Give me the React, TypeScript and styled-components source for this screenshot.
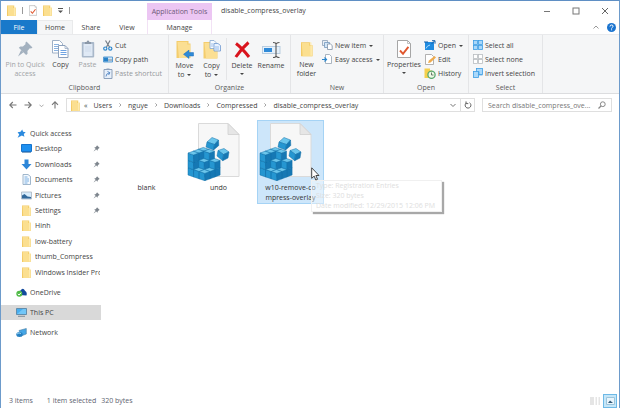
import React from "react";
import styled, { createGlobalStyle, css } from "styled-components";

const Global = createGlobalStyle`
  * { box-sizing: border-box; }
  body {
    margin: 0;
    background: #fff;
    color: #444;
    font: 7px/9px "Open Sans", "Noto Sans", sans-serif;
  }
  button, input { font: inherit; color: inherit; margin: 0; padding: 0; border: 0; background: none; }
  a { color: inherit; text-decoration: none; }
  ul { list-style: none; margin: 0; padding: 0; }
  svg { display: block; flex: none; }
`;

const Window = styled.div`
  display: flex;
  flex-direction: column;
  min-height: 100vh;
  border: 1px solid #6d9bcb;
  border-top-color: #5f8fc4;
  border-bottom: 0;
`;

/* Title bar and tabs */
const Header = styled.header`
  display: grid;
  grid-template-columns: 146px 65px 1fr auto;
  grid-template-rows: 19px 14px;
`;
const QuickTools = styled.div`
  display: flex;
  align-items: center;
  gap: 6px;
  padding-left: 6px;
`;
const Rule = styled.span`
  width: 1px;
  height: 7px;
  background: #999;
`;
const ToolButton = styled.button`
  display: flex;
  align-items: center;
  justify-content: center;
`;
const ContextTitle = styled.div`
  display: flex;
  align-items: center;
  justify-content: center;
  margin-top: 2px;
  background: #ecc6f3;
  color: #6e5a78;
  white-space: nowrap;
`;
const Title = styled.h1`
  margin: 0;
  padding: 5px 0 0 9px;
  font-size: 7px;
  line-height: 9px;
  font-weight: 400;
`;
const Controls = styled.div`
  display: flex;
  align-items: center;
  gap: 21px;
  padding-right: 10px;
`;
const Tabs = styled.nav`
  display: flex;
`;
const Tab = styled.button<{ $kind?: "file" | "active" | "context" }>`
  flex: 0 0 36px;
  line-height: 13px;
  ${(p) => p.$kind === "file" && css`background: #1979ca; color: #fff;`}
  ${(p) => p.$kind === "active" && css`background: #f5f6f7; border: 1px solid #e9eaeb; border-bottom: 0;`}
  ${(p) => p.$kind === "context" && css`border: solid #f2e2f5; border-width: 0 1px;`}
`;
const Help = styled.div`
  grid-column: 4;
  display: flex;
  align-items: center;
  justify-content: flex-end;
  gap: 8px;
  padding-right: 3px;
`;

/* Ribbon */
const RibbonBar = styled.div`
  display: flex;
  height: 60px;
  background: #f5f6f7;
  border-top: 1px solid #e9eaec;
  border-bottom: 1px solid #dcdddf;
`;
const GroupBox = styled.section<{ $width: number }>`
  flex: 0 0 ${(p) => p.$width}px;
  display: flex;
  flex-direction: column;
  border-right: 1px solid #e4e5e7;
  padding: 3px 2px 1px;
`;
const GroupBody = styled.div`
  flex: 1;
  display: flex;
`;
const GroupName = styled.h2`
  margin: 0;
  font-size: 7px;
  line-height: 9px;
  font-weight: 400;
  text-align: center;
  color: #5a5a5a;
`;
const LargeButton = styled.button<{ $width: number }>`
  flex: 0 0 ${(p) => p.$width}px;
  display: flex;
  flex-direction: column;
  align-items: center;
  gap: 2px;
  padding-top: 2px;
  white-space: pre;
  &:disabled { color: #a0a3a6; }
`;
const Stack = styled.div`
  display: flex;
  flex-direction: column;
  padding-left: 2px;
`;
const SmallButton = styled.button`
  display: flex;
  align-items: center;
  gap: 2px;
  height: 14px;
  white-space: nowrap;
  &:disabled { color: #96999c; }
`;
const Divider = styled.span`
  width: 1px;
  height: 42px;
  margin: 0 1px;
  background: #e4e5e7;
`;
const Arrow = styled.i`
  display: inline-block;
  border: 2px solid transparent;
  border-top-color: #444;
  border-bottom: 0;
  margin: 0 0 1px 3px;
`;
const ArrowBelow = styled(Arrow)`
  display: block;
  width: 4px;
  margin: 3px auto 0;
`;

/* Address row */
const AddressRow = styled.div`
  display: flex;
  align-items: center;
  gap: 7px;
  padding: 4px 7px 3px 8px;
`;
const History = styled.div`
  display: flex;
  align-items: center;
  gap: 7px;
`;
const AddressBox = styled.div`
  flex: 1;
  display: flex;
  align-items: center;
  height: 14px;
  border: 1px solid #dfdfdf;
  padding-left: 4px;
`;
const Crumbs = styled.nav`
  flex: 1;
  display: flex;
  align-items: center;
  gap: 6px;
  padding-left: 4px;
`;
const Refresh = styled.button`
  display: grid;
  place-items: center;
  width: 14px;
  height: 12px;
  margin-left: 4px;
  border-left: 1px solid #dfdfdf;
`;
const SearchBox = styled.label`
  flex: 0 0 130px;
  display: flex;
  align-items: center;
  height: 14px;
  border: 1px solid #dfdfdf;
  padding: 0 5px;
`;
const SearchInput = styled.input`
  flex: 1;
  min-width: 0;
  outline: 0;
  text-overflow: ellipsis;
  &::placeholder { color: #777; opacity: 1; }
`;

/* Body */
const Body = styled.div`
  flex: 1;
  display: flex;
`;
const Sidebar = styled.nav`
  flex: 0 0 100px;
  min-width: 0;
  overflow: hidden;
  padding-top: 11px;
`;
const Tree = styled.ul`
  display: grid;
  grid-template-columns: minmax(0, 1fr);
  grid-auto-rows: 1fr;
  height: 154px;
  margin-bottom: 5px;
`;
const Roots = styled.ul`
  display: grid;
  gap: 5px;
`;
const Place = styled.a<{ $nested?: boolean; $active?: boolean }>`
  display: flex;
  align-items: center;
  gap: 3px;
  height: 15px;
  padding: 0 1px 0 ${(p) => (p.$nested ? 20 : 15)}px;
  background: ${(p) => (p.$active ? "#d9d9d9" : "transparent")};
`;
const PlaceIcon = styled.span`
  display: grid;
  place-items: center;
  flex: 0 0 11px;
`;
const PlaceName = styled.span`
  flex: 1;
  overflow: hidden;
  white-space: nowrap;
`;
const Files = styled.main`
  flex: 1;
  display: flex;
  align-items: flex-start;
  gap: 5px;
  padding: 5px 12px;
`;
const FileSlot = styled.div`
  position: relative;
  flex: 0 0 67px;
`;
const FileButton = styled.button<{ $selected?: boolean }>`
  display: flex;
  flex-direction: column;
  align-items: center;
  gap: 2px;
  width: 100%;
  min-height: 83px;
  border: 1px solid ${(p) => (p.$selected ? "#a5d3f5" : "transparent")};
  background: ${(p) => (p.$selected ? "#cde6fa" : "transparent")};
  line-height: 10px;
  color: #333;
  white-space: pre;
  padding-top: 1px;
`;
const Thumb = styled.span`
  display: block;
  width: 63px;
  height: 59px;
`;
const Tooltip = styled.div`
  position: absolute;
  left: 54px;
  top: 60px;
  width: 131px;
  padding: 0 4px;
  border: 1px solid #f0f0f0;
  background: rgba(255, 255, 255, 0.4);
  box-shadow: 2px 2px 1px #a8a8a8;
  color: #dedede;
  line-height: 10px;
  white-space: nowrap;
`;
const Pointer = styled.span`
  position: absolute;
  left: 54px;
  top: 47px;
`;
const Status = styled.footer`
  display: flex;
  align-items: center;
  height: 15px;
  padding: 0 2px 0 8px;
  color: #5d6470;
`;
const StatusText = styled.span<{ $gap: number }>`
  margin-right: ${(p) => p.$gap}px;
`;
const ViewButtons = styled.div`
  display: flex;
  align-items: center;
  gap: 2px;
  margin-left: auto;
`;
const ViewButton = styled.button<{ $on?: boolean }>`
  display: grid;
  place-items: center;
  width: ${(p) => (p.$on ? 14 : 12)}px;
  height: 14px;
  border: ${(p) => (p.$on ? "1px solid #6db9e6" : "0")};
  background: ${(p) => (p.$on ? "#c5e6f8" : "none")};
`;

/* Icons */
const Folder = ({ w = 9, h = 11 }: { w?: number; h?: number }) => (
  <svg width={w} height={h} viewBox="0 0 9 11">
    <path d="M0 .5h7v2h1.600V11H0z" fill="#f3ca66" />
    <path d="M.6 1h5.600v2H8.600v8H1.200z" fill="#fbdf90" />
    <path d="M6.600.8h1v9.600" fill="none" stroke="#fff0bf" strokeWidth=".7" />
  </svg>
);
const CheckPage = ({ w, h }: { w: number; h: number }) => (
  <svg width={w} height={h} viewBox="0 0 14 18">
    <path d="M.5.5h10l3 3v14H.5z" fill="#fff" stroke="#a6a6a6" />
    <path d="M10.500 .5v3h3" fill="none" stroke="#a6a6a6" strokeWidth=".7" />
    <path d="M3 10.500l3 3.300 5.400-7" fill="none" stroke="#e0572e" strokeWidth="1.900" />
  </svg>
);
const PinLarge = () => (
  <svg width="16" height="18" viewBox="0 0 16 18">
    <g fill="#a3b1bf">
      <path d="M9.500 1.500l6 6-1.500 1-1.200-.3-2.400 2.900.2 2.600-1.500 1.300L1.800 7.800l1.500-1.300 2.600.1 2.800-2.500-.5-1.200z" />
      <path d="M4.200 10l2.300 2.300L1 16.500z" />
    </g>
  </svg>
);
const CopyPages = () => (
  <svg width="17" height="18" viewBox="0 0 17 18">
    <path d="M.5.5h7l3 3v9.500H.5z" fill="#fff" stroke="#9fb0c6" />
    <path d="M2 4.500h5M2 6.500h5M2 8.500h4M2 10.500h4" stroke="#8bb2e0" />
    <path d="M6.500 5.500h6.500l3 3v9H6.500z" fill="#fff" stroke="#8da1bc" />
    <path d="M13 5.500v3h3" fill="none" stroke="#8da1bc" strokeWidth=".7" />
    <path d="M8.500 10.500h6M8.500 12.500h6M8.500 14.500h6" stroke="#6fa3e2" />
  </svg>
);
const Clipboard = () => (
  <svg width="14" height="18" viewBox="0 0 14 18">
    <rect x=".8" y="2" width="12.400" height="15.400" rx=".8" fill="#a9b8ca" />
    <path d="M2.500 4h9v12h-9z" fill="#dfe9f5" />
    <path d="M4 4V2h1.500Q7-.8 8.500 2H10v2z" fill="#8b98a8" />
    <path d="M4 7h6M4 9h6M4 11h6" stroke="#c8d7e8" strokeWidth=".7" />
  </svg>
);
const FolderArrow = () => (
  <svg width="18" height="19" viewBox="0 0 18 19">
    <path d="M.5 1h12v2.500h2V18H.5z" fill="#f4cd6d" />
    <path d="M1.500 2h9.800v2.500h2.700V18h-11z" fill="#fbdf93" />
    <path d="M17.500 12.600v3.400h-4.500v2.500L7.500 14.300l5.500-4.200v2.500z" fill="#2f8ad8" stroke="#1f6db9" strokeWidth=".5" />
  </svg>
);
const FolderPages = () => (
  <svg width="18" height="19" viewBox="0 0 18 19">
    <path d="M.5 2h12v2.500h2V18.500H.5z" fill="#f4cd6d" />
    <path d="M1.500 3h9.800v3h2.700V18.500h-11z" fill="#fbdf93" />
    <path d="M7 .5h4l2 2v6H7z" fill="#f7fbff" stroke="#84a6d0" strokeWidth=".8" />
    <path d="M11 3.500h4l2.500 2v5.500H11z" fill="#eaf3ff" stroke="#6e98cf" strokeWidth=".8" />
    <path d="M8 4h2.500M8 6h2.500M12 7h4M12 9h4" stroke="#75a6e2" strokeWidth=".7" />
  </svg>
);
const Cross = () => (
  <svg width="17" height="19" viewBox="0 0 17 19">
    <path d="M2 3.500Q8 8 15 17M14.500 2.500Q8 8 1.800 17" fill="none" stroke="#d9141d" strokeWidth="3" />
  </svg>
);
const RenameIcon = () => (
  <svg width="19" height="19" viewBox="0 0 19 19">
    <rect x=".5" y="6.500" width="17.500" height="7" fill="#e6f1fb" stroke="#b9cde0" />
    <path d="M2 8h8v4H2z" fill="#2f8ad8" />
    <path d="M11 2.500q3 0 3 1.500v12q0 1.500-3 1.500M17.500 2.500q-3 0-3 1.500M17.500 17.500q-3 0-3-1.500" fill="none" stroke="#555" strokeWidth="1.100" />
  </svg>
);
const Scissors = () => (
  <svg width="10" height="11" viewBox="0 0 10 11">
    <path d="M2.500.5L6.500 7M7 .5L3.500 7" stroke="#777f88" strokeWidth="1.200" />
    <circle cx="2.300" cy="8.600" r="1.600" fill="none" stroke="#2c86cc" strokeWidth="1.200" />
    <circle cx="7.300" cy="8.600" r="1.600" fill="none" stroke="#2c86cc" strokeWidth="1.200" />
  </svg>
);
const PathIcon = () => (
  <svg width="10" height="7" viewBox="0 0 10 7">
    <path d="M.5 1h9v5h-9z" fill="#cfe5f7" stroke="#5b9dd3" />
    <path d="M1 1.500h4v4H1z" fill="#2882c8" />
    <path d="M5.500 4h1M7.500 4h1" stroke="#333" />
  </svg>
);
const ShortcutIcon = () => (
  <svg width="10" height="11" viewBox="0 0 10 11">
    <path d="M1 1.500h8v9H1z" fill="#e6effa" stroke="#8da1bb" />
    <path d="M3.500.5h3v1.500h-3z" fill="#8da1bb" />
    <path d="M3 8.500q0-3 3-3.500M4.500 3.500L7 4.800 5.500 7" fill="none" stroke="#5f8fc8" />
  </svg>
);
const NewItemIcon = () => (
  <svg width="11" height="10" viewBox="0 0 11 10">
    <path d="M.5.5h5v5h-5z" fill="#e8eef5" stroke="#8ba0b8" strokeWidth=".8" />
    <path d="M2.500 2.500h5v5h-5z" fill="#d3e6f7" stroke="#7497bd" strokeWidth=".8" />
    <path d="M5.500 4h3l1.700 1.500v4H5.500z" fill="#fff" stroke="#7f91a6" strokeWidth=".8" />
  </svg>
);
const EasyIcon = () => (
  <svg width="11" height="10" viewBox="0 0 11 10">
    <path d="M3.500.5h4l2 2v7h-6z" fill="#fff" stroke="#97a4b3" strokeWidth=".8" />
    <path d="M0 5.500h4M2.500 3.500l2 2-2 2" fill="none" stroke="#2c86cc" strokeWidth="1.200" />
  </svg>
);
const OpenIcon = () => (
  <svg width="12" height="11" viewBox="0 0 12 11">
    <path d="M1 2h9v8H1z" fill="#1f8be0" />
    <path d="M0 2h4M7.500 4l3-3M8 .7h3v3" stroke="#155fa8" fill="none" />
    <path d="M2 8.500q1-3 4-3.500" stroke="#a9dcff" fill="none" />
  </svg>
);
const EditIcon = () => (
  <svg width="12" height="11" viewBox="0 0 12 11">
    <path d="M1.500.5h6l2 2v8h-8z" fill="#fff" stroke="#a0a0a0" strokeWidth=".8" />
    <path d="M4 9l1-2.500L10.500 2 12 3.500 6.500 8.500z" fill="#efab4d" />
  </svg>
);
const HistoryIcon = () => (
  <svg width="12" height="11" viewBox="0 0 12 11">
    <path d="M.5.5H6v2h2V10H.5z" fill="#f5d04d" />
    <circle cx="7.500" cy="6.800" r="3.600" fill="#eefae7" stroke="#5aa870" strokeWidth="1.300" />
    <path d="M7.500 4.500V7h2" stroke="#4b5d52" strokeWidth=".8" fill="none" />
  </svg>
);
const SelectIcon = ({ kind }: { kind: "all" | "none" | "invert" }) => {
  const on = { fill: "#a9d8fa", stroke: "#3d9de4" };
  const off = { fill: "#fff", stroke: "#b9bcc0" };
  if (kind === "invert")
    return (
      <svg width="10" height="10" viewBox="0 0 10 10">
        <rect x="3.500" y=".5" width="6" height="6" {...on} strokeWidth=".8" />
        <rect x=".5" y="3.500" width="5" height="6" {...on} strokeWidth=".8" />
        <path d="M6 3.500v3.500h3.500" stroke="#3d9de4" fill="none" strokeWidth=".7" />
      </svg>
    );
  const style = kind === "all" ? on : off;
  return (
    <svg width="10" height="10" viewBox="0 0 10 10">
      {[0, 5].map((x) =>
        [0, 5].map((y) => (
          <rect key={`${x}${y}`} x={x + 0.5} y={y + 0.5} width="4" height="4" {...style} strokeWidth=".8" />
        )),
      )}
    </svg>
  );
};
const NavArrow = ({ dir }: { dir: "left" | "right" | "up" }) => {
  const d = {
    left: "M7.500 4H1M3.800 1L.8 4l3 3",
    right: "M.5 4H7M4.200 1l3 3-3 3",
    up: "M4 7.500V1M1 3.800l3-3 3 3",
  }[dir];
  return (
    <svg width="8" height="8" viewBox="0 0 8 8">
      <path d={d} fill="none" stroke="#777" strokeWidth="1.100" />
    </svg>
  );
};
const Chevron = ({ dir = "down", size = 6, color = "#777" }: { dir?: "down" | "up" | "right"; size?: number; color?: string }) => (
  <svg width={size} height={size} viewBox="0 0 6 6">
    <path
      d={dir === "down" ? "M.5 2L3 4.500 5.500 2" : dir === "up" ? "M.5 4.500L3 2l2.500 2.500" : "M2 .5L4.500 3 2 5.500"}
      fill="none"
      stroke={color}
    />
  </svg>
);
const SmallPin = () => (
  <svg width="7" height="7" viewBox="0 0 7 7">
    <path d="M4 .3L6.700 3l-.8.3-1.200 1.200-.2 1.300L1.200 2.500l1.300-.2L3.700 1zM2.300 4L.5 6.500 3 4.700z" fill="#7d858d" />
  </svg>
);
const StarPin = () => (
  <svg width="9" height="9" viewBox="0 0 9 9">
    <path d="M5.200.5l.9 2.300 2.600.4L6.800 5l.6 2.800-2.500-1.200L.6 8.700l1.600-3.200L.6 3.200l2.900-.5z" fill="#2b8ade" />
  </svg>
);
const Desktop = () => (
  <svg width="11" height="9" viewBox="0 0 11 9">
    <path d="M.5.500h10v7H.5z" fill="#1e90f0" stroke="#1674cd" />
    <path d="M1 8.300h9" stroke="#3a6ea5" strokeWidth=".8" />
  </svg>
);
const Download = () => (
  <svg width="11" height="11" viewBox="0 0 11 11">
    <path d="M3.500.5h4V5H10.500L5.500 10.500.5 5h3z" fill="#2d86d8" />
  </svg>
);
const DocumentIcon = () => (
  <svg width="11" height="11" viewBox="0 0 11 11">
    <path d="M2 .5h5l2.500 2v8H2z" fill="#f4f9fe" stroke="#89a4bf" strokeWidth=".8" />
    <path d="M3.500 3h3M3.500 5h4.500M3.500 7h4.500M3.500 9h3" stroke="#5e9edc" strokeWidth=".8" />
  </svg>
);
const Picture = () => (
  <svg width="11" height="9" viewBox="0 0 11 9">
    <path d="M.5 1h10v7H.5z" fill="#d8ecfb" stroke="#a8b4c0" strokeWidth=".8" />
    <path d="M1 7.500V4.500l2.500-1.500 3 2.500 3.500.5v1.500z" fill="#32699b" />
  </svg>
);
const OneDrive = () => (
  <svg width="11" height="9" viewBox="0 0 11 9">
    <path d="M3 7Q1.500 3 4.500 2.500 7-1 9 2.800 11.500 4 10.500 7.500z" fill="#12499d" />
    <circle cx="3.300" cy="5.800" r="3" fill="#4fba46" />
    <path d="M1.800 5.800l1.200 1.300 2-2.400" fill="none" stroke="#fff" />
  </svg>
);
const Computer = () => (
  <svg width="11" height="9" viewBox="0 0 11 9">
    <path d="M.5.5h10v6H.5z" fill="#47aef0" stroke="#54809f" strokeWidth=".8" />
    <path d="M1 6L7 1h3v5z" fill="#71c6f8" />
    <path d="M2 8.300h7" stroke="#7d8c98" />
  </svg>
);
const NetworkIcon = () => (
  <svg width="11" height="10" viewBox="0 0 11 10">
    <path d="M3 2.500l7.300-2v5.500L5 8z" fill="#45a6e6" stroke="#4c7d9f" strokeWidth=".6" />
    <ellipse cx="3.500" cy="6.500" rx="3.200" ry="2.500" fill="#2680c2" />
    <path d="M1 6q2-2 4-.5" stroke="#9ad5f7" fill="none" />
  </svg>
);

/* Stacked cubes: number of cubes on each cell of a 3x3 base */
const heights = [
  [3, 3, 3],
  [1, 2, 3],
  [1, 1, 2],
];
const pt = (i: number, j: number, k: number) => `${1 + 5.6 * i + 5.1 * j},${53 + 1.9 * i - 1.9 * j - 7.3 * k}`;
const RegistryFile = () => {
  const cubes: React.ReactNode[] = [];
  for (let i = 0; i < 3; i++)
    for (let j = 2; j >= 0; j--)
      for (let k = 0; k < heights[i][j]; k++)
        cubes.push(
          <g key={`${i}${j}${k}`}>
            <polygon fill="#2596d1" points={[pt(i, j, k), pt(i + 1, j, k), pt(i + 1, j, k + 1), pt(i, j, k + 1)].join(" ")} />
            <polygon fill="#1678b4" points={[pt(i + 1, j, k), pt(i + 1, j + 1, k), pt(i + 1, j + 1, k + 1), pt(i + 1, j, k + 1)].join(" ")} />
            <polygon fill="#6cc6ec" points={[pt(i, j, k + 1), pt(i + 1, j, k + 1), pt(i + 1, j + 1, k + 1), pt(i, j + 1, k + 1)].join(" ")} />
          </g>,
        );
  return (
    <svg width="54" height="59" viewBox="0 0 54 59">
      <path d="M11.500 1.500H41l11 11V54.500H11.500z" fill="#f7f7f7" stroke="#dadada" />
      <path d="M41 1.500v11h11z" fill="#e6e6e6" stroke="#cfcfcf" strokeWidth=".8" />
      <g stroke="#1270a8" strokeWidth=".5" strokeLinejoin="round">
        {cubes}
        <path d="M20 20l5-4.500 6.500 2.500-4 4.500z" fill="#6cc6ec" />
        <path d="M20 20l7.500 2.500-1 5.500L19 25z" fill="#2596d1" />
        <path d="M27.500 22.500l4-4.500.3 5.500-5.300 4.500z" fill="#1678b4" />
        <path d="M31 28.500l6-2 5 3.500-5.500 2.500z" fill="#6cc6ec" />
        <path d="M31 28.500l5.500 4-.8 6.200L30 34z" fill="#2596d1" />
        <path d="M36.500 32.500l5.500-2.500-1 6-5.300 2.700z" fill="#1678b4" />
      </g>
    </svg>
  );
};

const Group = ({ name, width, children }: { name: string; width: number; children: React.ReactNode }) => (
  <GroupBox $width={width} aria-label={name}>
    <GroupBody>{children}</GroupBody>
    <GroupName>{name}</GroupName>
  </GroupBox>
);

const quick = [
  { name: "Desktop", icon: <Desktop />, pinned: true },
  { name: "Downloads", icon: <Download />, pinned: true },
  { name: "Documents", icon: <DocumentIcon />, pinned: true },
  { name: "Pictures", icon: <Picture />, pinned: true },
  { name: "Settings", icon: <Folder />, pinned: true },
  { name: "Hinh", icon: <Folder /> },
  { name: "low-battery", icon: <Folder /> },
  { name: "thumb_Compress", icon: <Folder /> },
  { name: "Windows Insider Pro", icon: <Folder /> },
];
const roots = [
  { name: "OneDrive", icon: <OneDrive /> },
  { name: "This PC", icon: <Computer />, active: true },
  { name: "Network", icon: <NetworkIcon /> },
];
const path = ["Users", "nguye", "Downloads", "Compressed", "disable_compress_overlay"];

export default function App() {
  return (
    <>
      <Global />
      <Window>
        <Header>
          <QuickTools>
            <Folder />
            <Rule />
            <ToolButton aria-label="Properties"><CheckPage w={8} h={11} /></ToolButton>
            <ToolButton aria-label="New folder"><Folder /></ToolButton>
            <ToolButton aria-label="Customize toolbar">
              <svg width="5" height="6" viewBox="0 0 5 6">
                <path d="M0 .5h5" stroke="#555" />
                <path d="M0 2.500h5L2.500 5z" fill="#555" />
              </svg>
            </ToolButton>
            <Rule />
          </QuickTools>
          <ContextTitle>Application Tools</ContextTitle>
          <Title>disable_compress_overlay</Title>
          <Controls>
            <ToolButton aria-label="Minimize">
              <svg width="8" height="8" viewBox="0 0 8 8"><path d="M1 4.500h6" stroke="#777" /></svg>
            </ToolButton>
            <ToolButton aria-label="Maximize">
              <svg width="8" height="8" viewBox="0 0 8 8"><rect x="1" y="1" width="6" height="6" fill="none" stroke="#777" /></svg>
            </ToolButton>
            <ToolButton aria-label="Close">
              <svg width="8" height="8" viewBox="0 0 8 8"><path d="M1 1l6 6M7 1L1 7" stroke="#666" /></svg>
            </ToolButton>
          </Controls>
          <Tabs>
            <Tab $kind="file">File</Tab>
            <Tab $kind="active">Home</Tab>
            <Tab>Share</Tab>
            <Tab>View</Tab>
          </Tabs>
          <Tab $kind="context">Manage</Tab>
          <Help>
            <ToolButton aria-label="Collapse ribbon"><Chevron dir="up" color="#999" /></ToolButton>
            <ToolButton aria-label="Help">
              <svg width="9" height="9" viewBox="0 0 9 9">
                <circle cx="4.500" cy="4.500" r="4.500" fill="#1b74cf" />
                <path d="M3 3.500q0-1.500 1.600-1.500T6 3.400Q6 4.200 4.600 5v.5M4.600 6.300v1" fill="none" stroke="#fff" />
              </svg>
            </ToolButton>
          </Help>
        </Header>

        <RibbonBar>
          <Group name="Clipboard" width={168}>
            <LargeButton $width={44} disabled><PinLarge />{"Pin to Quick\naccess"}</LargeButton>
            <LargeButton $width={27}><CopyPages />Copy</LargeButton>
            <LargeButton $width={27} disabled><Clipboard />Paste</LargeButton>
            <Stack>
              <SmallButton><Scissors />Cut</SmallButton>
              <SmallButton><PathIcon />Copy path</SmallButton>
              <SmallButton disabled><ShortcutIcon />Paste shortcut</SmallButton>
            </Stack>
          </Group>
          <Group name="Organize" width={122}>
            <LargeButton $width={27}><FolderArrow /><span>{"Move\nto"}<Arrow /></span></LargeButton>
            <LargeButton $width={27}><FolderPages /><span>{"Copy\nto"}<Arrow /></span></LargeButton>
            <Divider />
            <LargeButton $width={28}><Cross /><span>Delete<ArrowBelow /></span></LargeButton>
            <LargeButton $width={30}><RenameIcon />Rename</LargeButton>
          </Group>
          <Group name="New" width={93}>
            <LargeButton $width={27}><Folder w={12} h={18} />{"New\nfolder"}</LargeButton>
            <Stack>
              <SmallButton><NewItemIcon /><span>New item<Arrow /></span></SmallButton>
              <SmallButton><EasyIcon /><span>Easy access<Arrow /></span></SmallButton>
            </Stack>
          </Group>
          <Group name="Open" width={85}>
            <LargeButton $width={36}><CheckPage w={14} h={18} /><span>Properties<ArrowBelow /></span></LargeButton>
            <Stack>
              <SmallButton><OpenIcon /><span>Open<Arrow /></span></SmallButton>
              <SmallButton><EditIcon />Edit</SmallButton>
              <SmallButton><HistoryIcon />History</SmallButton>
            </Stack>
          </Group>
          <Group name="Select" width={74}>
            <Stack>
              <SmallButton><SelectIcon kind="all" />Select all</SmallButton>
              <SmallButton><SelectIcon kind="none" />Select none</SmallButton>
              <SmallButton><SelectIcon kind="invert" />Invert selection</SmallButton>
            </Stack>
          </Group>
        </RibbonBar>

        <AddressRow>
          <History>
            <ToolButton aria-label="Back"><NavArrow dir="left" /></ToolButton>
            <ToolButton aria-label="Forward"><NavArrow dir="right" /></ToolButton>
            <ToolButton aria-label="Recent"><Chevron size={5} color="#999" /></ToolButton>
            <ToolButton aria-label="Up"><NavArrow dir="up" /></ToolButton>
          </History>
          <AddressBox>
            <Folder />
            <Crumbs aria-label="Path">
              <span>«</span>
              {path.map((p, i) => (
                <React.Fragment key={p}>
                  {i > 0 && <Chevron dir="right" size={4} />}
                  <a href="#">{p}</a>
                </React.Fragment>
              ))}
            </Crumbs>
            <ToolButton aria-label="Previous locations"><Chevron /></ToolButton>
            <Refresh aria-label="Refresh">
              <svg width="8" height="8" viewBox="0 0 8 8">
                <path d="M5.500 1.700A2.900 2.900 0 1 1 2.400 1.800M2 .4v2.200h2.300" fill="none" stroke="#666" />
              </svg>
            </Refresh>
          </AddressBox>
          <SearchBox>
            <SearchInput aria-label="Search" placeholder="Search disable_compress_ove..." />
            <svg width="8" height="8" viewBox="0 0 8 8">
              <circle cx="4.800" cy="3.200" r="2.400" fill="none" stroke="#888" />
              <path d="M3 5L.5 7.500" stroke="#888" strokeWidth="1.200" />
            </svg>
          </SearchBox>
        </AddressRow>

        <Body>
          <Sidebar aria-label="Places">
            <Tree>
              <li><Place href="#"><PlaceIcon><StarPin /></PlaceIcon><PlaceName>Quick access</PlaceName></Place></li>
              {quick.map((q) => (
                <li key={q.name}>
                  <Place href="#" $nested>
                    <PlaceIcon>{q.icon}</PlaceIcon>
                    <PlaceName>{q.name}</PlaceName>
                    {q.pinned && <SmallPin />}
                  </Place>
                </li>
              ))}
            </Tree>
            <Roots>
              {roots.map((r) => (
                <li key={r.name}>
                  <Place href="#" $active={r.active}><PlaceIcon>{r.icon}</PlaceIcon><PlaceName>{r.name}</PlaceName></Place>
                </li>
              ))}
            </Roots>
          </Sidebar>
          <Files>
            <FileSlot><FileButton><Thumb />blank</FileButton></FileSlot>
            <FileSlot><FileButton><Thumb><RegistryFile /></Thumb>undo</FileButton></FileSlot>
            <FileSlot>
              <FileButton $selected><Thumb><RegistryFile /></Thumb>{"w10-remove-co\nmpress-overlay"}</FileButton>
              <Tooltip role="tooltip">
                Type: Registration Entries<br />Size: 320 bytes<br />Date modified: 12/29/2015 12:06 PM
              </Tooltip>
              <Pointer>
                <svg width="9" height="14" viewBox="0 0 9 14">
                  <path d="M.7.8v10.500l2.500-2.200 1.600 3.900 1.700-.7-1.600-3.800H8z" fill="#fff" stroke="#333" strokeWidth=".9" />
                </svg>
              </Pointer>
            </FileSlot>
          </Files>
        </Body>

        <Status>
          <StatusText $gap={14}>3 items</StatusText>
          <StatusText $gap={5}>1 item selected</StatusText>
          <StatusText $gap={0}>320 bytes</StatusText>
          <ViewButtons>
            <ViewButton aria-label="Details view">
              <svg width="10" height="8" viewBox="0 0 10 8">
                <path d="M0 1h4M0 3h4M0 5h4M0 7h4" stroke="#aaa" strokeWidth=".6" />
                <path d="M5.500 1h1.500M5.500 3h1.500M5.500 5h1.500M5.500 7h1.500M8.500 1H10M8.500 3H10M8.500 5H10M8.500 7H10" stroke="#aaa" strokeWidth=".6" />
              </svg>
            </ViewButton>
            <ViewButton $on aria-label="Large icons">
              <svg width="9" height="8" viewBox="0 0 9 8">
                <path d="M.5.5h8v7h-8z" fill="#e9f5fc" stroke="#9cc5dc" />
                <path d="M2 6l2-2.500L7 6z" fill="#345a78" />
              </svg>
            </ViewButton>
          </ViewButtons>
        </Status>
      </Window>
    </>
  );
}
